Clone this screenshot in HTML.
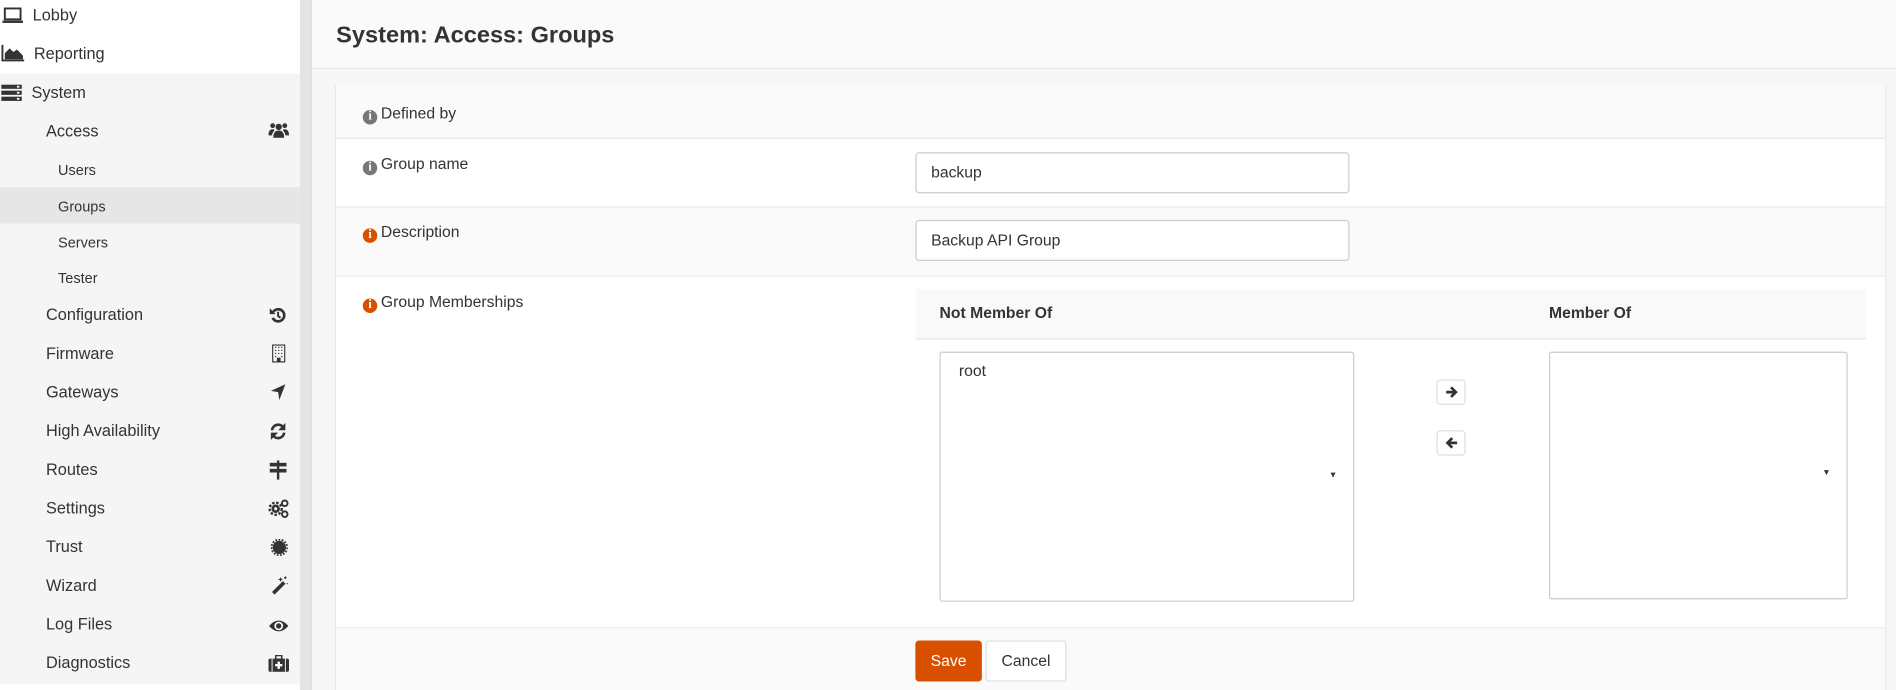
<!DOCTYPE html>
<html><head><meta charset="utf-8"><style>
*{box-sizing:border-box;margin:0;padding:0}
html,body{width:1896px;height:690px;overflow:hidden;background:#f7f7f7}
#w{position:absolute;left:0;top:0;width:1568px;height:571px;transform:scale(1.2092,1.2084);transform-origin:0 0;font-family:"Liberation Sans",sans-serif;color:#333}
.a{position:absolute}
.sb{left:0;top:0;width:248px;height:566px;background:#f5f5f5}
.it{position:absolute;font-size:13.5px;line-height:18px;color:#333}
.sub{font-size:12px}
.lbl{position:absolute;left:300px;font-size:13px;color:#333}
.info{display:inline-block;width:12px;height:12px;border-radius:50%;background:#777;color:#fff;font-size:10px;line-height:12px;text-align:center;font-weight:bold;font-family:"Liberation Serif",serif;margin-right:3px;vertical-align:-1px}
.or{background:#d94f00}
.inp{position:absolute;left:757px;width:359px;height:34px;border:1px solid #ccc;border-radius:3px;background:#fff;font-size:13px;padding:8px 12px}
.row{position:absolute;left:278px;width:1281px;border-bottom:1px solid #e8e8e8}
.btn{position:absolute;left:1188px;width:24px;height:21px;border:1px solid #ddd;border-radius:3px;background:#fff}
.btn svg{position:absolute;left:6px;top:4px}
</style></head><body><div id="w">
<div class="a" style="left:0;top:0;width:248px;height:61px;background:#fff"></div>
<div class="a sb" style="top:61px;height:505px"></div>
<div class="a" style="left:0;top:566px;width:248px;height:5px;background:#fff"></div>
<div class="a" style="left:248px;top:0;width:9px;height:571px;background:#e4e4e4"></div>
<div class="a" style="left:257px;top:0;width:1px;height:571px;background:#ddd"></div>
<div class="a" style="left:0;top:155px;width:248px;height:30px;background:#e6e6e6"></div>

<svg class="a" style="left:2px;top:6px" width="18" height="14"><rect x="2" y="1" width="13" height="9" fill="none" stroke="#333" stroke-width="1.6"/><rect x="0" y="11" width="17" height="2" fill="#333"/></svg>
<div class="it" style="left:27px;top:4px">Lobby</div>
<svg class="a" style="left:1px;top:37px" width="20" height="14"><path d="M1 0V13H19" stroke="#333" stroke-width="1.6" fill="none"/><path d="M3 12V7L7 3L10 6L13 4L18 9V12Z" fill="#333"/></svg>
<div class="it" style="left:28px;top:36px">Reporting</div>
<svg class="a" style="left:1px;top:70px" width="18" height="14"><rect x="0" y="0" width="17" height="3.5" fill="#333"/><rect x="0" y="5" width="17" height="3.5" fill="#333"/><rect x="0" y="10" width="17" height="3.5" fill="#333"/><rect x="13" y="1" width="2" height="1.5" fill="#fff"/><rect x="13" y="6" width="2" height="1.5" fill="#fff"/><rect x="13" y="11" width="2" height="1.5" fill="#fff"/></svg>
<div class="it" style="left:26px;top:68px">System</div>
<div class="it" style="left:38px;top:100px">Access</div>
<svg class="a" style="left:222px;top:101px" width="17" height="14"><circle cx="3.5" cy="3" r="2" fill="#333"/><circle cx="13.5" cy="3" r="2" fill="#333"/><circle cx="8.5" cy="4" r="2.6" fill="#333"/><path d="M0 11Q0 6 3.5 6Q5 6 5 7Q3 9 3 11Z M17 11Q17 6 13.5 6Q12 6 12 7Q14 9 14 11Z M4 13Q4 7 8.5 7Q13 7 13 13Z" fill="#333"/></svg>
<div class="it sub" style="left:48px;top:132px">Users</div>
<div class="it sub" style="left:48px;top:162px">Groups</div>
<div class="it sub" style="left:48px;top:192px">Servers</div>
<div class="it sub" style="left:48px;top:221px">Tester</div>
<div class="it" style="left:38px;top:252px">Configuration</div>
<div class="it" style="left:38px;top:284px">Firmware</div>
<div class="it" style="left:38px;top:316px">Gateways</div>
<div class="it" style="left:38px;top:348px">High Availability</div>
<div class="it" style="left:38px;top:380px">Routes</div>
<div class="it" style="left:38px;top:412px">Settings</div>
<div class="it" style="left:38px;top:444px">Trust</div>
<div class="it" style="left:38px;top:476px">Wizard</div>
<div class="it" style="left:38px;top:508px">Log Files</div>
<div class="it" style="left:38px;top:540px">Diagnostics</div>
<svg class="a" style="left:223px;top:254px" width="14" height="14"><path d="M3 4A5 5 0 1 1 2.5 9" stroke="#333" stroke-width="2.2" fill="none"/><path d="M0 1L5 6H0Z" fill="#333"/><path d="M7 4V7.5L9 9" stroke="#333" stroke-width="1.6" fill="none"/></svg>
<svg class="a" style="left:225px;top:285px" width="11" height="15"><rect x="0.5" y="0.5" width="10" height="14" fill="none" stroke="#333"/><path d="M2.5 2.5h1M5 2.5h1M7.5 2.5h1M2.5 5h1M5 5h1M7.5 5h1M2.5 7.5h1M5 7.5h1M7.5 7.5h1M2.5 10h1M7.5 10h1" stroke="#333"/><rect x="4" y="11" width="3" height="4" fill="#333"/></svg>
<svg class="a" style="left:224px;top:318px" width="13" height="13"><path d="M12 0L0 5.5L6 6.5L7 13Z" fill="#333"/></svg>
<svg class="a" style="left:223px;top:350px" width="14" height="14"><path d="M2 6A5 5 0 0 1 11 3.5M12 8A5 5 0 0 1 3 10.5" stroke="#333" stroke-width="2.2" fill="none"/><path d="M13 0V6H7Z M1 14V8H7Z" fill="#333"/></svg>
<svg class="a" style="left:223px;top:381px" width="14" height="16"><rect x="0" y="2" width="14" height="3" fill="#333"/><rect x="0" y="7" width="14" height="3" fill="#333"/><rect x="6" y="0" width="2" height="16" fill="#333"/></svg>
<svg class="a" style="left:222px;top:413px" width="17" height="16"><circle cx="6" cy="8" r="3.5" fill="#333"/><circle cx="6" cy="8" r="5" fill="none" stroke="#333" stroke-width="2" stroke-dasharray="2 1.4"/><circle cx="6" cy="8" r="1.3" fill="#f5f5f5"/><circle cx="13.5" cy="3.5" r="2.3" fill="none" stroke="#333" stroke-width="1.6"/><circle cx="13.5" cy="12.5" r="2.3" fill="none" stroke="#333" stroke-width="1.6"/></svg>
<svg class="a" style="left:224px;top:446px" width="14" height="14"><circle cx="7" cy="7" r="5.5" fill="#333"/><circle cx="7" cy="7" r="6.5" fill="none" stroke="#333" stroke-width="1.5" stroke-dasharray="1.5 1.2"/></svg>
<svg class="a" style="left:224px;top:477px" width="14" height="15"><path d="M2 14L11 5" stroke="#333" stroke-width="3"/><path d="M8 1v3M6.5 2.5h3M12 0v2M11 1h2M13 6h1" stroke="#333"/></svg>
<svg class="a" style="left:222px;top:512px" width="17" height="12"><path d="M0.5 6Q8.5 -3 16.5 6Q8.5 15 0.5 6Z" fill="#333"/><circle cx="8.5" cy="6" r="3.6" fill="#fff"/><circle cx="8.5" cy="6" r="2.2" fill="#333"/></svg>
<svg class="a" style="left:222px;top:542px" width="17" height="14"><rect x="0" y="3" width="17" height="11" rx="1.5" fill="#333"/><rect x="6" y="0.5" width="5" height="3" fill="none" stroke="#333" stroke-width="1.2"/><path d="M8.5 5.5v6M5.5 8.5h6" stroke="#fff" stroke-width="2"/><path d="M3 3v11M14 3v11" stroke="#f5f5f5" stroke-width="0.8"/></svg>

<div class="a" style="left:258px;top:0;width:1310px;height:57px;background:#fafafa;border-bottom:1px solid #e5e5e5"></div>
<div class="a" style="left:278px;top:18px;font-size:19.5px;font-weight:bold;color:#333">System: Access: Groups</div>
<div class="a" style="left:277px;top:71px;width:1283px;height:500px;border-left:1px solid #e5e5e5;border-right:1px solid #e5e5e5;background:#fff"></div>
<div class="row" style="top:71px;height:44px;background:#fafafa"></div>
<div class="row" style="top:115px;height:57px;background:#fff"></div>
<div class="row" style="top:172px;height:57px;background:#fafafa"></div>
<div class="row" style="top:229px;height:291px;background:#fff"></div>
<div class="a" style="left:278px;top:520px;width:1281px;height:51px;background:#fafafa"></div>
<div class="lbl" style="top:86px"><span class="info">i</span>Defined by</div>
<div class="lbl" style="top:128px"><span class="info">i</span>Group name</div>
<div class="lbl" style="top:184px"><span class="info or">i</span>Description</div>
<div class="lbl" style="top:242px"><span class="info or">i</span>Group Memberships</div>
<div class="inp" style="top:126px">backup</div>
<div class="inp" style="top:182px">Backup API Group</div>
<div class="a" style="left:757px;top:239px;width:786px;height:42px;background:#f9f9f9;border-bottom:1px solid #e5e5e5"></div>
<div class="a" style="left:777px;top:251px;font-size:13px;font-weight:bold">Not Member Of</div>
<div class="a" style="left:1281px;top:251px;font-size:13px;font-weight:bold">Member Of</div>
<div class="a" style="left:777px;top:291px;width:343px;height:207px;border:1px solid #ccc;border-radius:2px;background:#fff"></div>
<div class="a" style="left:793px;top:299px;font-size:13px">root</div>
<div class="a" style="left:1099px;top:390px;font-size:7px">▼</div>
<div class="a" style="left:1281px;top:291px;width:247px;height:205px;border:1px solid #ccc;border-radius:2px;background:#fff"></div>
<div class="a" style="left:1507px;top:388px;font-size:7px">▼</div>
<div class="btn" style="top:314px"><svg width="11" height="11"><path d="M1 5.5H8M5 1.5L9 5.5L5 9.5" stroke="#333" stroke-width="2.2" fill="none"/></svg></div>
<div class="btn" style="top:356px"><svg width="11" height="11"><path d="M10 5.5H3M6 1.5L2 5.5L6 9.5" stroke="#333" stroke-width="2.2" fill="none"/></svg></div>
<div class="a" style="left:757px;top:530px;width:55px;height:34px;background:#d94f00;border-radius:3px;color:#fff;font-size:13px;text-align:center;line-height:34px">Save</div>
<div class="a" style="left:815px;top:530px;width:67px;height:34px;background:#fff;border:1px solid #ddd;border-radius:3px;font-size:13px;text-align:center;line-height:32px">Cancel</div>
</div></body></html>
